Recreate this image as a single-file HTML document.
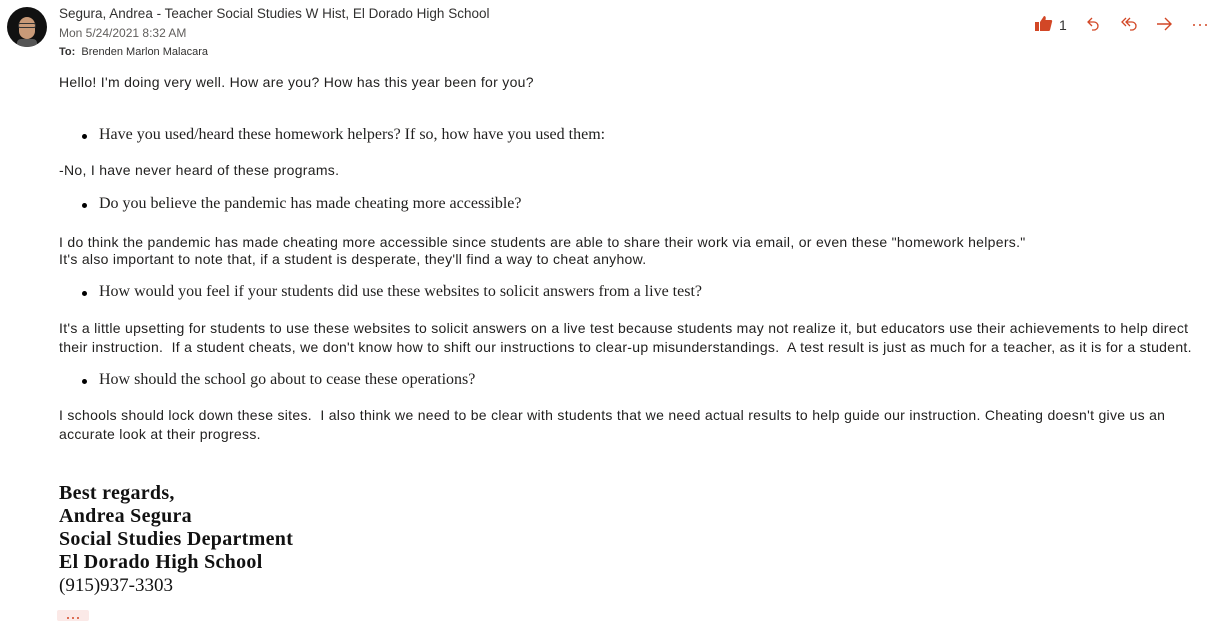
<!DOCTYPE html>
<html><head><meta charset="utf-8"><style>
body{margin:0;background:#fff;width:1222px;height:638px;overflow:hidden;position:relative;font-family:"Liberation Sans",sans-serif;color:#201f1e}
.a{position:absolute;white-space:nowrap}
.t{font-size:14px;letter-spacing:0.3px;left:59px}
.s{font-family:"Liberation Serif",serif;font-size:16px;left:99px}
.s:before{content:"";position:absolute;left:-17px;top:8px;width:5px;height:5px;border-radius:50%;background:#000}
.g{font-family:"Liberation Serif",serif;font-weight:bold;font-size:20px;letter-spacing:0.3px;left:59px;color:#111}
</style></head><body>
<div class="a" style="left:7px;top:7px;width:40px;height:40px;border-radius:50%;background:#111;overflow:hidden">
<div style="position:absolute;left:12px;top:10px;width:16px;height:22px;border-radius:8px;background:#c99a78"></div>
<div style="position:absolute;left:11px;top:16px;width:18px;height:5px;border:1px solid #333;border-radius:2px;box-sizing:border-box"></div>
<div style="position:absolute;left:10px;top:32px;width:20px;height:10px;background:#555;border-radius:4px"></div>
</div>
<div class="a" style="left:59px;top:6px;font-size:13.5px;color:#323130">Segura, Andrea - Teacher Social Studies W Hist, El Dorado High School</div>
<div class="a" style="left:59px;top:26px;font-size:12px;color:#605e5c">Mon 5/24/2021 8:32 AM</div>
<div class="a" style="left:59px;top:46px;font-size:11px;color:#323130"><b style="font-weight:600">To:</b>&nbsp; Brenden Marlon Malacara</div>
<svg class="a" style="left:1030px;top:14px" width="180" height="22" viewBox="0 0 180 22">
<path d="M5 8h4v9H5zM10 8l4-6c2 0 2 2 1.5 4H21c1 0 1.5 1 1 2l-2 8c-.3 1-1 1-2 1h-8z" fill="#d24726"/>
<text x="29" y="16" font-family="Liberation Sans" font-size="14" fill="#323130">1</text>
<path d="M62 4l-4 4 4 4M58 8h6a4 4 0 0 1 0 8h-2" fill="none" stroke="#d24726" stroke-width="1.3"/>
<path d="M96 4l-4 4 4 4M100 4l-4 4 4 4M96 8h6a4 4 0 0 1 0 8h-2" fill="none" stroke="#d24726" stroke-width="1.3"/>
<path d="M127 10h14M135 4l6 6-6 6" fill="none" stroke="#d24726" stroke-width="1.4"/>
<circle cx="164" cy="11" r="1" fill="#d24726"/><circle cx="170" cy="11" r="1" fill="#d24726"/><circle cx="176" cy="11" r="1" fill="#d24726"/>
</svg>
<div class="a t" style="top:74px">Hello! I'm doing very well. How are you? How has this year been for you?</div>
<div class="a s" style="top:126px">Have you used/heard these homework helpers? If so, how have you used them:</div>
<div class="a t" style="top:162px">-No, I have never heard of these programs.</div>
<div class="a s" style="top:195px">Do you believe the pandemic has made cheating more accessible?</div>
<div class="a t" style="top:234px">I do think the pandemic has made cheating more accessible since students are able to share their work via email, or even these "homework helpers."</div>
<div class="a t" style="top:251px">It's also important to note that, if a student is desperate, they'll find a way to cheat anyhow.</div>
<div class="a s" style="top:283px">How would you feel if your students did use these websites to solicit answers from a live test?</div>
<div class="a t" style="top:320px">It's a little upsetting for students to use these websites to solicit answers on a live test because students may not realize it, but educators use their achievements to help direct</div>
<div class="a t" style="top:339px">their instruction.&nbsp; If a student cheats, we don't know how to shift our instructions to clear-up misunderstandings.&nbsp; A test result is just as much for a teacher, as it is for a student.</div>
<div class="a s" style="top:371px">How should the school go about to cease these operations?</div>
<div class="a t" style="top:407px">I schools should lock down these sites.&nbsp; I also think we need to be clear with students that we need actual results to help guide our instruction. Cheating doesn't give us an</div>
<div class="a t" style="top:426px">accurate look at their progress.</div>
<div class="a g" style="top:482px">Best regards,</div>
<div class="a g" style="top:505px">Andrea Segura</div>
<div class="a g" style="top:528px">Social Studies Department</div>
<div class="a g" style="top:551px">El Dorado High School</div>
<div class="a g" style="top:575px;font-weight:normal;font-size:19px;letter-spacing:0">(915)937-3303</div>
<div class="a" style="left:57px;top:610px;width:32px;height:11px;background:#fbe9e7;border-radius:2px"><svg width="32" height="11"><circle cx="11" cy="6" r="1" fill="#d24726"/><circle cx="16" cy="6" r="1" fill="#d24726"/><circle cx="21" cy="6" r="1" fill="#d24726"/></svg></div>
</body></html>
